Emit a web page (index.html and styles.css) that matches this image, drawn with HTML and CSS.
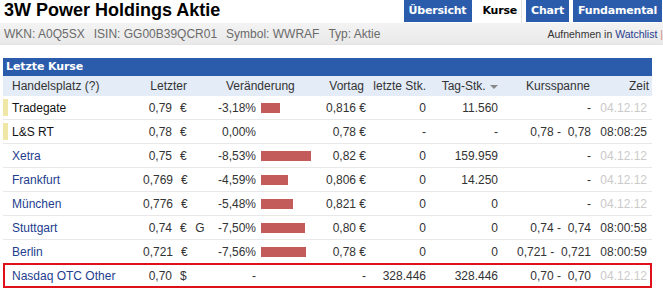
FILE: index.html
```html
<!DOCTYPE html>
<html lang="de">
<head>
<meta charset="utf-8">
<title>3W Power Holdings Aktie</title>
<link rel="stylesheet" href="styles.css">
</head>
<body>
<div class="top">
  <h1 class="title">3W Power Holdings Aktie</h1>
  <nav class="tabs">
    <a class="tab">Übersicht</a>
    <a class="tab active">Kurse</a>
    <a class="tab">Chart</a>
    <a class="tab">Fundamental</a>
  </nav>
</div>
<div class="info">
  <div class="ids">
    <span>WKN: A0Q5SX</span>
    <span>ISIN: GG00B39QCR01</span>
    <span>Symbol: WWRAF</span>
    <span>Typ: Aktie</span>
  </div>
  <div class="watch">Aufnehmen in <a>Watchlist</a> <span class="sep">|</span></div>
</div>
<div class="box">
  <div class="boxhead">Letzte Kurse</div>
  <table class="kurse">
    <colgroup>
      <col class="c1"><col class="c2"><col class="c3"><col class="c4"><col class="c5">
      <col class="c6"><col class="c7"><col class="c8"><col class="c9"><col class="c10">
    </colgroup>
    <thead>
      <tr>
        <th class="l">Handelsplatz (?)</th>
        <th class="r">Letzter</th>
        <th colspan="3" class="chg">Veränderung</th>
        <th class="r vt">Vortag</th>
        <th class="r">letzte Stk.</th>
        <th class="r">Tag-Stk. <span class="arrow"></span></th>
        <th class="r ks">Kursspanne</th>
        <th class="r zt">Zeit</th>
      </tr>
    </thead>
    <tbody>
      <tr>
        <td class="name rt"><span class="mark"></span>Tradegate</td>
        <td class="r">0,79<span class="cur">€</span></td><td class="g"></td>
        <td class="r">-3,18%</td><td class="bar"><span class="b" style="width:19px"></span></td>
        <td class="r">0,816 €</td><td class="r">0</td><td class="r">11.560</td>
        <td class="r">-</td><td class="r t old">04.12.12</td>
      </tr>
      <tr>
        <td class="name rt"><span class="mark"></span>L&amp;S RT</td>
        <td class="r">0,78<span class="cur">€</span></td><td class="g"></td>
        <td class="r">0,00%</td><td class="bar"></td>
        <td class="r">0,78 €</td><td class="r">-</td><td class="r">-</td>
        <td class="r">0,78 -&nbsp; 0,78</td><td class="r t">08:08:25</td>
      </tr>
      <tr>
        <td class="name lk">Xetra</td>
        <td class="r">0,75<span class="cur">€</span></td><td class="g"></td>
        <td class="r">-8,53%</td><td class="bar"><span class="b" style="width:50px"></span></td>
        <td class="r">0,82 €</td><td class="r">0</td><td class="r">159.959</td>
        <td class="r">-</td><td class="r t old">04.12.12</td>
      </tr>
      <tr>
        <td class="name lk">Frankfurt</td>
        <td class="r">0,769<span class="cur">€</span></td><td class="g"></td>
        <td class="r">-4,59%</td><td class="bar"><span class="b" style="width:27px"></span></td>
        <td class="r">0,806 €</td><td class="r">0</td><td class="r">14.250</td>
        <td class="r">-</td><td class="r t old">04.12.12</td>
      </tr>
      <tr>
        <td class="name lk">München</td>
        <td class="r">0,776<span class="cur">€</span></td><td class="g"></td>
        <td class="r">-5,48%</td><td class="bar"><span class="b" style="width:32px"></span></td>
        <td class="r">0,821 €</td><td class="r">0</td><td class="r">0</td>
        <td class="r">-</td><td class="r t old">04.12.12</td>
      </tr>
      <tr>
        <td class="name lk">Stuttgart</td>
        <td class="r">0,74<span class="cur">€</span></td><td class="g">G</td>
        <td class="r">-7,50%</td><td class="bar"><span class="b" style="width:44px"></span></td>
        <td class="r">0,80 €</td><td class="r">0</td><td class="r">0</td>
        <td class="r">0,74 -&nbsp; 0,74</td><td class="r t">08:00:58</td>
      </tr>
      <tr class="before-hl">
        <td class="name lk">Berlin</td>
        <td class="r">0,721<span class="cur">€</span></td><td class="g"></td>
        <td class="r">-7,56%</td><td class="bar"><span class="b" style="width:45px"></span></td>
        <td class="r">0,78 €</td><td class="r">0</td><td class="r">0</td>
        <td class="r">0,721 -&nbsp; 0,721</td><td class="r t">08:00:59</td>
      </tr>
      <tr class="hl">
        <td class="name lk">Nasdaq OTC Other</td>
        <td class="r">0,70<span class="cur">$</span></td><td class="g"></td>
        <td class="r">-</td><td class="bar"></td>
        <td class="r">-</td><td class="r">328.446</td><td class="r">328.446</td>
        <td class="r">0,70 -&nbsp; 0,70</td><td class="r t old">04.12.12</td>
      </tr>
    </tbody>
  </table>
</div>
</body>
</html>
```

FILE: styles.css
```css
html, body {
  margin: 0;
  padding: 0;
  background: #fff;
}
body {
  width: 663px;
  height: 293px;
  overflow: hidden;
  font-family: "Liberation Sans", Arial, sans-serif;
  font-size: 12px;
  color: #333;
}
.top {
  display: flex;
  justify-content: space-between;
  align-items: flex-start;
  height: 23px;
}
.title {
  margin: 0;
  padding-left: 4px;
  font-size: 18px;
  line-height: 21px;
  font-weight: bold;
  color: #000;
}
.tabs {
  display: flex;
  gap: 4px;
  padding-right: 1px;
}
.tab {
  display: block;
  height: 22px;
  line-height: 21px;
  padding: 0 5px;
  background: #2b5cac;
  color: #fff;
  font-family: "DejaVu Sans", Verdana, sans-serif;
  font-weight: bold;
  font-size: 11px;
  letter-spacing: -0.2px;
}
.tab:first-child { padding: 0 6px 0 5px; }
.tab.active {
  background: #fff;
  color: #000;
  height: 23px;
  border-right: 1px solid #e2e2e2;
  padding: 0 4px 0 6px;
}
.info {
  display: flex;
  justify-content: space-between;
  align-items: center;
  height: 21px;
  background: linear-gradient(#f3f3f3, #e9e9e9);
  border-bottom: 1px solid #e4e4e4;
}
.ids {
  display: flex;
  gap: 9px;
  padding-left: 4px;
  color: #6a6a6a;
  font-size: 12px;
}
.watch {
  font-size: 10.5px;
  color: #333;
  padding-right: 0;
  white-space: nowrap;
}
.watch a { color: #1f3b8c; }
.watch .sep { color: #d08a8a; }
.box {
  margin: 13px 0 0 3px;
  width: 649px;
}
.boxhead {
  height: 18px;
  line-height: 18px;
  background: #2b5cac;
  color: #fff;
  font-family: "DejaVu Sans", Verdana, sans-serif;
  font-weight: bold;
  font-size: 11px;
  padding-left: 3px;
  letter-spacing: -0.1px;
}
.kurse {
  width: 649px;
  border-collapse: separate;
  border-spacing: 0;
  table-layout: fixed;
}
.c1 { width: 137px; }
.c2 { width: 50px; }
.c3 { width: 20px; }
.c4 { width: 49px; }
.c5 { width: 59px; }
.c6 { width: 51px; }
.c7 { width: 60px; }
.c8 { width: 72px; }
.c9 { width: 93px; }
.c10 { width: 58px; }
th {
  background: #e4ecf8;
  height: 20px;
  padding: 0 3px;
  font-weight: normal;
  color: #333;
  white-space: nowrap;
}
th.l { text-align: left; padding-left: 9px; }
th.r { text-align: right; }
th.chg { text-align: left; padding-left: 36px; }
th.vt { padding-right: 5px; }
th.zt { padding-right: 3px; }
th.ks { padding-right: 4px; }
.arrow {
  display: inline-block;
  width: 0;
  height: 0;
  border-left: 4px solid transparent;
  border-right: 4px solid transparent;
  border-top: 4px solid #888;
  vertical-align: 1px;
  margin-left: 1px;
}
td {
  height: 23px;
  padding: 0 3px;
  border-bottom: 1px solid #e8e8e8;
  white-space: nowrap;
  color: #333;
}
td.r { text-align: right; }
td.t { padding-right: 5px; }
td.g { text-align: center; padding: 0; }
td.name {
  position: relative;
  padding-left: 9px;
}
td.name.rt { color: #111; }
td.name.lk { color: #233d8f; }
.mark {
  position: absolute;
  left: 0;
  top: 3px;
  bottom: 3px;
  width: 5px;
  background: #efe7a6;
}
.cur {
  display: inline-block;
  width: 7px;
  margin-left: 8px;
  text-align: left;
}
td.bar { padding: 0 0 0 2px; }
.b {
  display: block;
  height: 10px;
  background: #c45b5b;
}
.old { color: #cacaca; }
tr.before-hl td { border-bottom: none; }
tr.hl td {
  height: 21px;
  border-top: 2px solid #e0101a;
  border-bottom: 2px solid #e0101a;
}
tr.hl td:first-child { border-left: 2px solid #e0101a; padding-left: 7px; }
tr.hl td:last-child { border-right: 2px solid #e0101a; padding-right: 3px; }
```
